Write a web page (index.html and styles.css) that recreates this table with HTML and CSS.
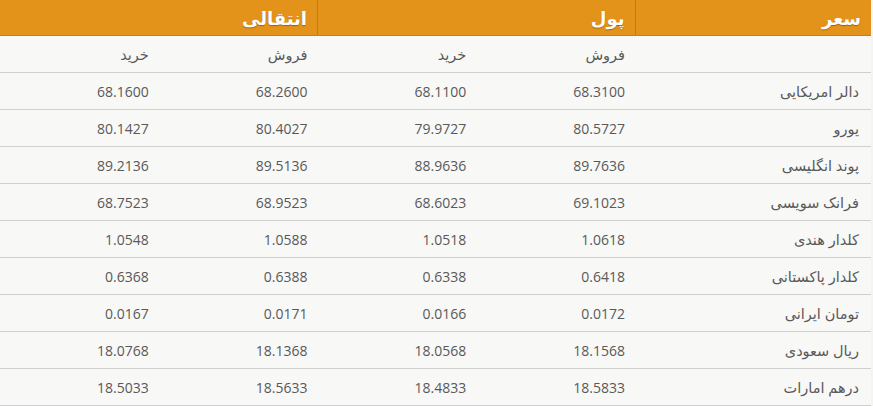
FILE: index.html
```html
<!DOCTYPE html>
<html lang="fa" dir="rtl">
<head>
<meta charset="utf-8">
<link rel="stylesheet" href="styles.css">
</head>
<body>
<table class="rates">
  <colgroup>
    <col class="c-name"><col class="c-num"><col class="c-num"><col class="c-num"><col class="c-num">
  </colgroup>
  <thead>
    <tr class="head">
      <th>سعر</th>
      <th colspan="2" class="grp">پول</th>
      <th colspan="2" class="grp">انتقالی</th>
    </tr>
  </thead>
  <tbody>
    <tr class="sub"><td></td><td>فروش</td><td>خرید</td><td>فروش</td><td>خرید</td></tr>
    <tr><td class="name">دالر امریکایی</td><td>68.3100</td><td>68.1100</td><td>68.2600</td><td>68.1600</td></tr>
    <tr><td class="name">یورو</td><td>80.5727</td><td>79.9727</td><td>80.4027</td><td>80.1427</td></tr>
    <tr><td class="name">پوند انگلیسی</td><td>89.7636</td><td>88.9636</td><td>89.5136</td><td>89.2136</td></tr>
    <tr><td class="name">فرانک سویسی</td><td>69.1023</td><td>68.6023</td><td>68.9523</td><td>68.7523</td></tr>
    <tr><td class="name">کلدار هندی</td><td>1.0618</td><td>1.0518</td><td>1.0588</td><td>1.0548</td></tr>
    <tr><td class="name">کلدار پاکستانی</td><td>0.6418</td><td>0.6338</td><td>0.6388</td><td>0.6368</td></tr>
    <tr><td class="name">تومان ایرانی</td><td>0.0172</td><td>0.0166</td><td>0.0171</td><td>0.0167</td></tr>
    <tr><td class="name">ریال سعودی</td><td>18.1568</td><td>18.0568</td><td>18.1368</td><td>18.0768</td></tr>
    <tr><td class="name">درهم امارات</td><td>18.5833</td><td>18.4833</td><td>18.5633</td><td>18.5033</td></tr>
  </tbody>
</table>
</body>
</html>
```
FILE: styles.css
```css
html, body {
  margin: 0;
  padding: 0;
  background: #f4f4f3;
}
body {
  font-family: "Open Sans", "DejaVu Sans", sans-serif;
  color: #595959;
}
.rates {
  width: 871px;
  margin-left: 0;
  margin-right: auto;
  border-collapse: collapse;
  table-layout: fixed;
  background: #f8f8f7;
}
.c-name { width: 236px; }
.c-num { width: 158.75px; }
.head th {
  background: #e4931a;
  color: #fff;
  font-weight: 600;
  font-size: 18px;
  height: 35px;
  padding: 0 10px;
  text-align: right;
  border-bottom: 1px solid #c97c10;
  text-shadow: 0 1px 1px rgba(0,0,0,0.3);
}
.head th.grp {
  border-right: 1px solid #c47a12;
}
td {
  font-size: 14px;
  height: 36px;
  padding: 0 10px;
  text-align: right;
  border-bottom: 1px solid #cfcfcf;
  white-space: nowrap;
}
td.name {
  padding-right: 12px;
  font-size: 14.5px;
}
.sub td {
  font-size: 14.5px;
}
```
